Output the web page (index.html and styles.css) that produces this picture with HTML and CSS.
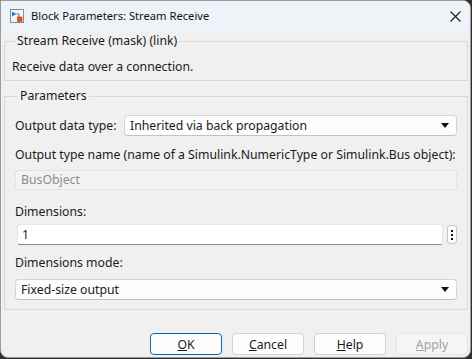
FILE: index.html
```html
<!DOCTYPE html>
<html lang="en">
<head>
  <meta charset="UTF-8" />
  <title>Block Parameters: Stream Receive</title>
  <link rel="stylesheet" href="styles.css">
</head>
<body>
  <div class="window">
    <div class="titlebar">
      <svg class="app-icon" width="14" height="14" viewBox="0 0 14 14">
        <rect x="0.5" y="0.5" width="13" height="13" fill="#f4f4f4" stroke="#8c8c8c"/>
        <path d="M2 2.5 L6.5 5 L2 7.5 Z" fill="#2a7fd4"/>
        <path d="M6.5 5 H9 V8" fill="none" stroke="#2a7fd4"/>
        <rect x="7.5" y="8" width="4.5" height="4.5" fill="#e0561f" stroke="#b33b10" stroke-width="0.6"/>
      </svg>
      <span class="title">Block Parameters: Stream Receive</span>
      <svg class="close" width="11" height="11" viewBox="0 0 11 11">
        <path d="M0.5 0.5 L10.5 10.5 M10.5 0.5 L0.5 10.5" stroke="#1a1a1a" stroke-width="1.1"/>
      </svg>
    </div>

    <fieldset class="group desc">
      <legend>Stream Receive (mask) (link)</legend>
      <p>Receive data over a connection.</p>
    </fieldset>

    <fieldset class="group params">
      <legend>Parameters</legend>
      <div class="row inline">
        <label>Output data type:</label>
        <div class="select wide">
          <span>Inherited via back propagation</span>
          <span class="arrow"></span>
        </div>
      </div>
      <label class="lbl l-type">Output type name (name of a Simulink.NumericType or Simulink.Bus object):</label>
      <div class="field disabled">BusObject</div>
      <label class="lbl l-dim">Dimensions:</label>
      <div class="edit-row">
        <div class="edit">1</div>
        <div class="more"><i></i><i></i><i></i></div>
      </div>
      <label class="lbl l-mode">Dimensions mode:</label>
      <div class="select">
        <span>Fixed-size output</span>
        <span class="arrow"></span>
      </div>
    </fieldset>

    <div class="buttons">
      <button class="btn default"><u>O</u>K</button>
      <button class="btn"><u>C</u>ancel</button>
      <button class="btn"><u>H</u>elp</button>
      <button class="btn off"><u>A</u>pply</button>
    </div>
  </div>
</body>
</html>
```

FILE: styles.css
```css
* { box-sizing: border-box; margin: 0; padding: 0; }
body {
  background: #2e2e2e;
  font-family: "Noto Sans", "Liberation Sans", sans-serif;
  font-size: 12.25px;
  color: #1a1a1a;
}
.window {
  width: 471px;
  height: 358px;
  background: #f0f0f0;
  border: 1px solid #9c9c9c;
  border-radius: 0 8px 8px 8px;
  overflow: hidden;
  display: flex;
  flex-direction: column;
}
.titlebar {
  height: 30px;
  background: #eef3fa;
  display: flex;
  align-items: center;
  padding: 0 9px 0 9px;
}
.app-icon { margin-right: 7px; }
.title { flex: 1; line-height: 16px; font-size: 11.2px; color: #111; }

.group {
  border: 1px solid #d9d9d9;
  margin: 2px 2px 0 3px;
  padding: 0 10px 0 7px;
}
.group legend {
  padding: 0 2px;
  margin-left: 3px;
  line-height: 16px;
}
.desc p { line-height: 16px; padding: 10px 0 5px; }
.params { margin-top: 7px; padding: 0 10px 9px 10px; }

.row.inline {
  display: flex;
  align-items: center;
  margin-top: 11px;
}
.row.inline label { width: 109px; }
.select {
  height: 21px;
  background: #fdfdfd;
  border: 1px solid #d4d4d4;
  border-bottom-color: #c2c2c2;
  border-radius: 4px;
  display: flex;
  align-items: center;
  justify-content: space-between;
  padding: 0 7px 0 5px;
}
.select.wide { flex: 1; }
.arrow {
  width: 0; height: 0;
  border-left: 4px solid transparent;
  border-right: 4px solid transparent;
  border-top: 5px solid #111;
}
.lbl { display: block; line-height: 16px; }
.l-type { margin-top: 11px; }
.field {
  margin-top: 7px;
  height: 20px;
  line-height: 18px;
  padding: 0 5px;
  border: 1px solid #e2e2e2;
  border-radius: 3px;
  background: #f3f3f3;
}
.field.disabled { color: #8c8c8c; }
.l-dim { margin-top: 14px; }
.edit-row {
  margin-top: 4px;
  display: flex;
  align-items: center;
  gap: 4px;
  padding-left: 2px;
}
.edit {
  flex: 1;
  height: 21px;
  line-height: 19px;
  padding: 0 4px;
  background: #fff;
  border: 1px solid #e6e6e6;
  border-bottom: 1px solid #8a8a8a;
  border-radius: 3px;
}
.more {
  width: 10px;
  height: 19px;
  border: 1px solid #c6c6c6;
  border-radius: 3px;
  background: #fbfbfb;
  display: flex;
  flex-direction: column;
  align-items: center;
  justify-content: center;
  gap: 2px;
}
.more i { width: 2px; height: 2px; background: #111; }
.l-mode { margin-top: 10px; }
.l-mode + .select { margin-top: 8px; }

.buttons {
  display: flex;
  justify-content: flex-end;
  gap: 10px;
  margin-top: 23px;
  padding-right: 2px;
}
.btn {
  width: 72px;
  height: 22px;
  font: inherit;
  color: #1a1a1a;
  background: #fdfdfd;
  border: 1px solid #d0d0d0;
  border-radius: 4px;
}
.btn.default { border: 1px solid #0067c0; }
.btn.off { background: #f5f5f5; border-color: #e5e5e5; color: #a3a3a3; }
```
